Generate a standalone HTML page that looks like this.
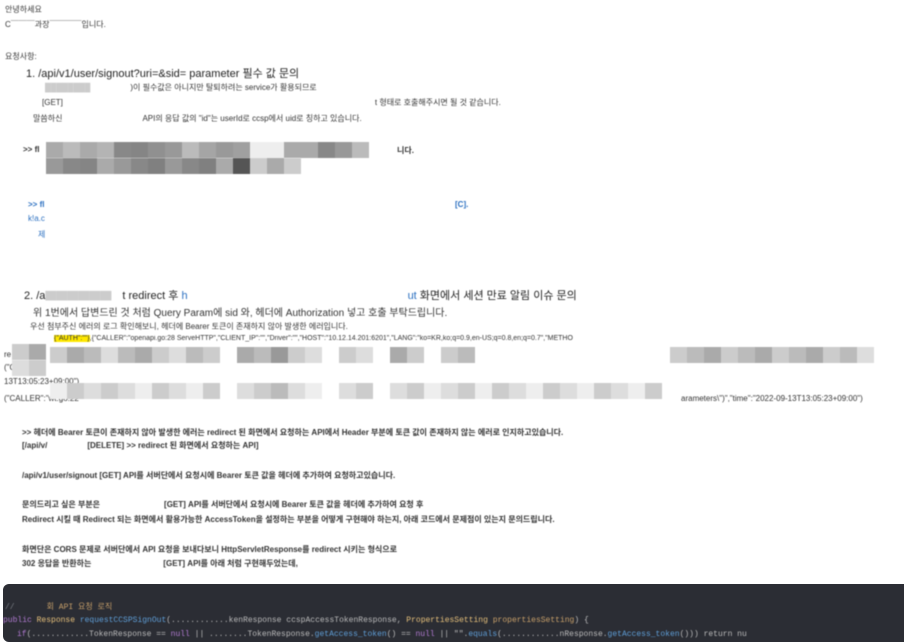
<html><head><style>
body{margin:0;width:904px;height:642px;background:#fff;position:relative;overflow:hidden;font-family:"Liberation Sans","Noto Sans CJK KR",sans-serif;color:#333;}
.t{position:absolute;white-space:nowrap;font-size:8px;filter:blur(0.4px)}
.b{font-size:11px;color:#222}
.px{position:absolute;display:flex;filter:blur(0.6px)}
.px i{display:block;width:17px;height:16px}
.code{position:absolute;left:3px;top:584px;width:901px;height:58px;background:#2b2d34;border-radius:6px 0 0 6px;font-family:"Liberation Mono","Noto Sans CJK KR",monospace;font-size:8px}
.code div{position:absolute;white-space:nowrap;filter:blur(0.4px)}
</style></head><body>
<div class="t" style="left:5px;top:4px">안녕하세요</div>
<div class="t" style="left:5px;top:19px">C<span style="color:#bbb">▔▔▔</span>과장<span style="color:#bbb">▔▔▔▔</span>입니다.</div>
<div class="t" style="left:5px;top:51px">요청사항:</div>
<div class="t b" style="left:26px;top:65px">1. /api/v1/user/signout?uri=&sid= parameter 필수 값 문의</div>
<div class="t" style="left:45px;top:82px;"><span style="color:#ccc">████████</span>　　　　　)이 필수값은 아니지만 탈퇴하려는 service가 활용되므로</div>
<div class="t" style="left:42px;top:97px">[GET]　　　　　　　　　　　　　　　　　　　　　　　　　　　　　　　　　　　　　　　t 형태로 호출해주시면 될 것 같습니다.</div>
<div class="t" style="left:33px;top:113px">말씀하신　　　　　　　　　　API의 응답 값의 "id"는 userId로 ccsp에서 uid로 칭하고 있습니다.</div>
<div class="t" style="left:23px;top:145px;font-weight:bold">&gt;&gt; fl</div>
<div class="t" style="left:397px;top:145px;font-weight:bold">니다.</div>
<div class="px" style="left:46px;top:142px"><i style="background:#aaa"></i><i style="background:#bbb"></i><i style="background:#aaa"></i><i style="background:#b4b4b4"></i><i style="background:#888"></i><i style="background:#858585"></i><i style="background:#909090"></i><i style="background:#999"></i><i style="background:#bbb"></i><i style="background:#a5a5a5"></i><i style="background:#999"></i><i style="background:#a0a0a0"></i><i style="background:#eee"></i><i style="background:#eee"></i><i style="background:#aaa"></i><i style="background:#aaa"></i><i style="background:#888"></i><i style="background:#999"></i><i style="background:#bbb"></i></div>
<div class="px" style="left:46px;top:158px"><i style="background:#999"></i><i style="background:#888"></i><i style="background:#858585"></i><i style="background:#aaa"></i><i style="background:#999"></i><i style="background:#888"></i><i style="background:#808080"></i><i style="background:#999"></i><i style="background:#888"></i><i style="background:#808080"></i><i style="background:#aaa"></i><i style="background:#555"></i><i style="background:#ccc"></i><i style="background:#aaa"></i><i style="background:#ccc"></i></div>
<div class="t" style="left:28px;top:200px;color:#2a6fc0;font-weight:bold">&gt;&gt; fl</div>
<div class="t" style="left:455px;top:200px;color:#2a6fc0;font-weight:bold">[C].</div>
<div class="t" style="left:28px;top:214px;color:#2a6fc0">k!a.c</div>
<div class="t" style="left:38px;top:229px;color:#2a6fc0">제</div>
<div class="t b" style="left:24px;top:287px">2. /a<span style="color:#ccc">▇▇▇▇▇▇</span>　t redirect 후 <span style="color:#2a6fc0">h</span>　　　　　　　　　　　　　　　　　　　　<span style="color:#2a6fc0">ut</span> 화면에서 세션 만료 알림 이슈 문의</div>
<div class="t" style="left:33px;top:304px;font-size:10px">위 1번에서 답변드린 것 처럼 Query Param에 sid 와, 헤더에 Authorization 넣고 호출 부탁드립니다.</div>
<div class="t" style="left:30px;top:321px">우선 첨부주신 에러의 로그 확인해보니, 헤더에 Bearer 토큰이 존재하지 않아 발생한 에러입니다.</div>
<div class="t" style="left:54px;top:335px;font-size:7px"><span style="background:#ffe800">{"AUTH":""}</span>,{"CALLER":"openapi.go:28 ServeHTTP","CLIENT_IP":"","Driver":"","HOST":"10.12.14.201:6201","LANG":"ko=KR,ko;q=0.9,en-US;q=0.8,en;q=0.7","METHO</div>
<div class="t" style="left:4px;top:350px">re</div>
<div class="t" style="left:4px;top:363px">("C</div>
<div class="t" style="left:4px;top:377px">13T13:05:23+09:00")</div>
<div class="t" style="left:4px;top:394px">("CALLER":"wt.go:22</div>
<div class="t" style="left:681px;top:394px">arameters\")","time":"2022-09-13T13:05:23+09:00")</div>
<div class="px" style="left:12px;top:344px"><i style="background:#ccc"></i><i style="background:#aaa;"></i></div>
<div class="px" style="left:12px;top:360px"><i style="background:#ddd"></i><i style="background:#ccc"></i></div>
<div class="px" style="left:50px;top:347px"><i style="background:#ccc"></i><i style="background:#aaa"></i><i style="background:#bbb"></i><i style="background:#ddd"></i><i style="background:#bbb"></i><i style="background:#aaa"></i><i style="background:#ccc"></i><i style="background:#ddd"></i><i style="background:#bbb"></i><i style="background:#ccc"></i><i style="background:#fff"></i><i style="background:#aaa"></i><i style="background:#bbb"></i><i style="background:#999"></i><i style="background:#ccc"></i><i style="background:#ddd"></i><i style="background:#fff"></i><i style="background:#ccc"></i><i style="background:#ddd"></i><i style="background:#fff"></i><i style="background:#aaa"></i><i style="background:#ccc"></i><i style="background:#fff"></i><i style="background:#ccc"></i><i style="background:#bbb"></i></div>
<div class="px" style="left:670px;top:347px"><i style="background:#ccc"></i><i style="background:#bbb"></i><i style="background:#aaa"></i><i style="background:#ccc"></i><i style="background:#bbb"></i><i style="background:#aaa"></i><i style="background:#ccc"></i><i style="background:#bbb"></i><i style="background:#aaa"></i><i style="background:#ccc"></i><i style="background:#bbb"></i><i style="background:#ddd"></i></div>
<div class="px" style="left:50px;top:383px"><i style="background:#eee"></i><i style="background:#ccc"></i><i style="background:#ddd"></i><i style="background:#ccc"></i><i style="background:#ddd"></i><i style="background:#eee"></i><i style="background:#ccc"></i><i style="background:#ddd"></i><i style="background:#eee"></i><i style="background:#ccc"></i><i style="background:#fff"></i><i style="background:#ddd"></i><i style="background:#ccc"></i><i style="background:#bbb"></i><i style="background:#ddd"></i><i style="background:#eee"></i><i style="background:#fff"></i><i style="background:#ddd"></i><i style="background:#ccc"></i><i style="background:#fff"></i><i style="background:#ddd"></i><i style="background:#ccc"></i><i style="background:#eee"></i><i style="background:#ddd"></i><i style="background:#ccc"></i><i style="background:#eee"></i><i style="background:#ccc"></i><i style="background:#ddd"></i><i style="background:#eee"></i><i style="background:#ccc"></i><i style="background:#ddd"></i><i style="background:#eee"></i><i style="background:#ccc"></i><i style="background:#ddd"></i><i style="background:#eee"></i><i style="background:#ccc"></i></div>
<div class="t" style="left:22px;top:427px;font-weight:bold">&gt;&gt; 헤더에 Bearer 토큰이 존재하지 않아 발생한 에러는 redirect 된 화면에서 요청하는 API에서 Header 부분에 토큰 값이 존재하지 않는 에러로 인지하고있습니다.</div>
<div class="t" style="left:22px;top:440px;font-weight:bold">[/api/v/　　　　　[DELETE] &gt;&gt; redirect 된 화면에서 요청하는 API]</div>
<div class="t" style="left:22px;top:470px;font-weight:bold">/api/v1/user/signout [GET] API를 서버단에서 요청시에 Bearer 토큰 값을 헤더에 추가하여 요청하고있습니다.</div>
<div class="t" style="left:22px;top:499px;font-weight:bold">문의드리고 싶은 부분은　　　　　　　　[GET] API를 서버단에서 요청시에 Bearer 토큰 값을 헤더에 추가하여 요청 후</div>
<div class="t" style="left:22px;top:514px;font-weight:bold">Redirect 시킬 때 Redirect 되는 화면에서 활용가능한 AccessToken을 설정하는 부분을 어떻게 구현해야 하는지, 아래 코드에서 문제점이 있는지 문의드립니다.</div>
<div class="t" style="left:22px;top:544px;font-weight:bold">화면단은 CORS 문제로 서버단에서 API 요청을 보내다보니 HttpServletResponse를 redirect 시키는 형식으로</div>
<div class="t" style="left:22px;top:558px;font-weight:bold">302 응답을 반환하는　　　　　　　　　[GET] API를 아래 처럼 구현해두었는데,</div>
<div class="code">
<div style="left:2px;top:17px;color:#7a7e85">//　　　　<span style="color:#c8a06a">회 API 요청 로직</span></div>
<div style="left:0px;top:32px;color:#b07ad0">public <span style="color:#e6c07b">Response</span> <span style="color:#5f9fd8">requestCCSPSignOut</span><span style="color:#bbb">(............kenResponse ccspAccessTokenResponse, </span><span style="color:#e6c07b">PropertiesSetting</span> <span style="color:#c8a06a">propertiesSetting</span><span style="color:#bbb">) {</span></div>
<div style="left:14px;top:46px;color:#b07ad0">if<span style="color:#bbb">(............TokenResponse == </span>null<span style="color:#bbb"> || ........TokenResponse.</span><span style="color:#5f9fd8">getAccess_token</span><span style="color:#bbb">() == </span>null<span style="color:#bbb"> || "".</span><span style="color:#5f9fd8">equals</span><span style="color:#bbb">(............nResponse.</span><span style="color:#5f9fd8">getAccess_token</span><span style="color:#bbb">())) return nu</span></div>
</div>
</body></html>
